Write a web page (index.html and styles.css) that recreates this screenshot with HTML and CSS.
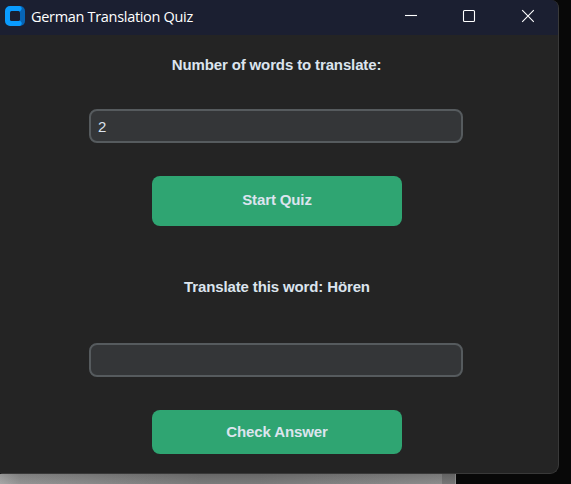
FILE: index.html
```html
<!DOCTYPE html>
<html lang="en">
<head>
<meta charset="utf-8">
<title>German Translation Quiz</title>
<link rel="stylesheet" href="styles.css">
</head>
<body>
<main class="window">
  <header class="titlebar">
    <svg class="logo" width="20" height="20" viewBox="0 0 20 20">
      <path fill="#0764b4" d="M14 0h1a5 5 0 0 1 5 5v10a5 5 0 0 1-5 5h-1z"/>
      <path fill="#0a9bff" d="M5 0h9a2.500 2.500 0 0 1 2 4.200L15 5.500V14.500l1 1.300A2.500 2.500 0 0 1 14 20H5a5 5 0 0 1-5-5V5a5 5 0 0 1 5-5z"/>
      <rect x="5" y="5" width="10" height="10" rx="1.500" fill="#1b1f31"/>
    </svg>
    <h1 class="title">German Translation Quiz</h1>
    <div class="controls">
      <svg width="14" height="14" viewBox="0 0 14 14"><path d="M1 6.500h12"/></svg>
      <svg width="14" height="14" viewBox="0 0 14 14"><rect x="1.500" y="1.500" width="11" height="11" rx="1"/></svg>
      <svg width="14" height="14" viewBox="0 0 14 14"><path d="M1.200 1.200l11.600 11.600M12.800 1.200L1.200 12.800"/></svg>
    </div>
  </header>
  <form class="quiz">
    <label class="label label-count" for="count">Number of words to translate:</label>
    <input class="entry" id="count" type="text" value="2">
    <button class="button button-start" type="button">Start Quiz</button>
    <label class="label label-word" for="answer">Translate this word: Hören</label>
    <input class="entry" id="answer" type="text">
    <button class="button button-check" type="button">Check Answer</button>
  </form>
</main>
<div class="backdrop"></div>
</body>
</html>
```
FILE: styles.css
```css
* { box-sizing: border-box; }
body {
  margin: 0;
  height: 484px;
  overflow: hidden;
  background: #080808;
  font-family: "Liberation Sans", Arial, sans-serif;
}
.window {
  width: 559px;
  height: 474px;
  overflow: hidden;
  background: #242424;
  border: solid #393939;
  border-width: 0 1px 1px 0;
  border-radius: 0 8px 9px 2px;
}
.titlebar {
  display: flex;
  align-items: center;
  height: 35px;
  padding: 0 23px 3px 5px;
  background: #1b1f31;
}
.logo { flex: none; }
.title {
  margin: 1px 0 0 6px;
  color: #fff;
  font: 400 14.5px/20px "Open Sans", "Noto Sans", sans-serif;
  letter-spacing: -0.31px;
  white-space: nowrap;
}
.controls {
  display: flex;
  gap: 45px;
  margin-left: auto;
}
.controls svg {
  fill: none;
  stroke: #fff;
  stroke-width: 1.1;
}
.controls svg:first-child {
  margin-right: -1px;
}
.quiz {
  display: flex;
  flex-direction: column;
  align-items: center;
  padding-right: 6px;
}
.label {
  color: #dce4ee;
  font-size: 15px;
  font-weight: 700;
  line-height: 20px;
  letter-spacing: -0.13px;
  white-space: nowrap;
}
.label-count { margin: 20px 0 34px 1px; }
.label-word { margin: 51px 0 46px 2px; }
.entry {
  width: 374px;
  height: 34px;
  padding: 0 7px;
  color: #dce4ee;
  background: #343638;
  border: 2px solid #565b5e;
  border-radius: 8px;
  outline: 0;
  font: 15px/20px "Liberation Sans", Arial, sans-serif;
}
.button {
  width: 250px;
  margin: 33px 0 0 2px;
  padding: 0;
  border: 0;
  border-radius: 8px;
  background: #2fa572;
  color: #dce4ee;
  font: 700 15px/20px "Liberation Sans", Arial, sans-serif;
  letter-spacing: -0.13px;
}
.button-start {
  height: 50px;
  padding-bottom: 2px;
}
.button-check { height: 44px; }
.backdrop {
  width: 456px;
  height: 10px;
  background:
    linear-gradient(rgba(0, 0, 0, 0.08), rgba(255, 255, 255, 0.08)),
    linear-gradient(90deg, #a0a0a0 0, #8a8a8a 20px, #707070 200px, #707070 260px, #828282 442px, #6b6b6b 442px, #6b6b6b 455px, #888 455px);
}
```
